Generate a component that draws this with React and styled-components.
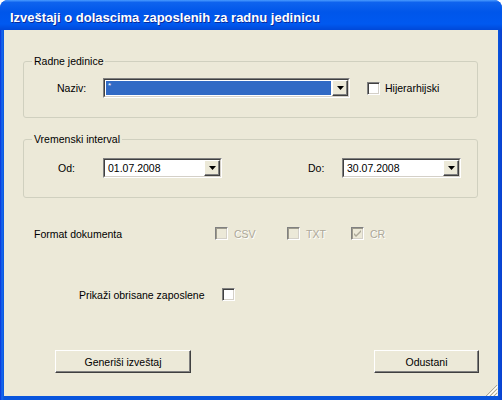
import React from "react";
import styled, { createGlobalStyle } from "styled-components";

const GlobalStyle = createGlobalStyle`
  html, body {
    margin: 0;
    padding: 0;
    background: #ffffff;
  }
  body {
    font-family: "Liberation Sans", Arial, sans-serif;
    font-size: 10.5px;
  }
`;

// prozor
const Window = styled.div`
  width: 502px;
  height: 400px;
  display: flex;
  flex-direction: column;
  box-sizing: border-box;
  background: #0855dd;
  border-radius: 8px 8px 0 0;
  overflow: hidden;
`;

const TitleBar = styled.div`
  height: 30px;
  flex: none;
  box-sizing: border-box;
  padding: 4px 0 0 10px;
  display: flex;
  align-items: center;
  background: linear-gradient(
    #4a9bff 0%,
    #0f63ee 8%,
    #0056ea 40%,
    #0059f0 80%,
    #0048d8 100%
  );
  color: #ffffff;
  font-family: "Liberation Sans", Arial, sans-serif;
  font-weight: bold;
  font-size: 13px;
  text-shadow: 1px 1px #0a2a9a;
  white-space: nowrap;
`;

const Frame = styled.div`
  flex: 1;
  display: flex;
  padding: 0 4px 4px 4px;
  background: linear-gradient(to right, #0831d9 0, #166aee 2px, #0855dd 4px, #0855dd 498px, #0a3fcf 502px);
`;

const Body = styled.div`
  position: relative;
  flex: 1;
  box-sizing: border-box;
  padding: 0 20px 0 19px;
  background: #ece9d8;
  display: flex;
  flex-direction: column;
  color: #000000;
`;

// okviri za grupe
const Group = styled.fieldset`
  margin: ${(p) => p.$top}px 0 0 0;
  padding: ${(p) => p.$padTop}px 0 19px 0;
  border: 1px solid #d0d0bf;
  border-radius: 3px;
  min-inline-size: 0;
`;

const Legend = styled.legend`
  margin-left: 8px;
  padding: 0 2px;
  line-height: 14px;
  height: 14px;
  color: #000000;
`;

const Row = styled.div`
  display: flex;
  align-items: center;
  padding-left: ${(p) => p.$pad || 0}px;
  height: ${(p) => p.$h || 20}px;
  margin-top: ${(p) => p.$top || 0}px;
`;

const Label = styled.span`
  width: ${(p) => (p.$w ? `${p.$w}px` : "auto")};
  flex: none;
  margin-right: ${(p) => p.$gap || 0}px;
  color: ${(p) => (p.$disabled ? "#aca899" : "#000")};
  text-shadow: ${(p) => (p.$disabled ? "1px 1px #ffffff" : "none")};
  white-space: nowrap;
`;

// kombo
const Combo = styled.div`
  width: ${(p) => p.$w}px;
  height: 20px;
  flex: none;
  box-sizing: border-box;
  display: flex;
  border-style: solid;
  border-width: 1px;
  border-color: #808080 #ffffff #ffffff #808080;
  margin-right: ${(p) => p.$gap || 0}px;
`;

const ComboInner = styled.div`
  flex: 1;
  display: flex;
  box-sizing: border-box;
  border-style: solid;
  border-width: 1px;
  border-color: #404040 #d4d0c8 #d4d0c8 #404040;
  background: #ffffff;
`;

const ComboValue = styled.div`
  flex: 1;
  margin: 1px;
  padding-left: 2px;
  display: flex;
  align-items: ${(p) => (p.$selected ? "flex-start" : "center")};
  background: ${(p) => (p.$selected ? "#316ac5" : "transparent")};
  color: ${(p) => (p.$selected ? "#ffffff" : "#000000")};
  font-size: ${(p) => (p.$selected ? "8px" : "10.5px")};
  line-height: ${(p) => (p.$selected ? "9px" : "14px")};
`;

const DropButton = styled.div`
  width: 16px;
  flex: none;
  box-sizing: border-box;
  display: flex;
  align-items: center;
  justify-content: center;
  background: #ece9d8;
  border-style: solid;
  border-width: 1px;
  border-color: #ffffff #404040 #404040 #ffffff;
  box-shadow: inset -1px -1px #808080;
`;

// check box
const Box = styled.span`
  width: 13px;
  height: 13px;
  flex: none;
  box-sizing: border-box;
  display: flex;
  align-items: center;
  justify-content: center;
  border-style: solid;
  border-width: 1px;
  border-color: #808080 #ffffff #ffffff #808080;
  margin-right: ${(p) => p.$gap || 0}px;
  background: ${(p) => (p.$disabled ? "#ece9d8" : "#ffffff")};
  box-shadow: inset 1px 1px ${(p) => (p.$disabled ? "#9d9a8c" : "#404040")},
    inset -1px -1px #d4d0c8;
`;

const Option = styled.div`
  width: ${(p) => p.$w}px;
  flex: none;
  display: flex;
  align-items: center;
`;

const ButtonRow = styled.div`
  display: flex;
  justify-content: space-between;
  padding-left: 32px;
  margin: 49px -1px 0 0;
`;

const Button = styled.button`
  width: ${(p) => p.$w}px;
  height: 23px;
  box-sizing: border-box;
  padding: 0;
  font-family: "Liberation Sans", Arial, sans-serif;
  font-size: 10.5px;
  color: #000000;
  background: #ece9d8;
  border-style: solid;
  border-width: 1px;
  border-color: #ffffff #404040 #404040 #ffffff;
  box-shadow: inset -1px -1px #808080;
`;

const Grip = styled.svg`
  position: absolute;
  right: 0;
  bottom: 0;
`;

const Arrow = () => (
  <svg width="7" height="4" viewBox="0 0 7 4">
    <path d="M0 0h7L3.5 4z" fill="#000" />
  </svg>
);

const Check = () => (
  <svg width="9" height="9" viewBox="0 0 9 9">
    <path d="M1 4l2 2 5-5v2L3 8 1 6z" fill="#aca899" />
  </svg>
);

const DateCombo = ({ value, w, gap }) => (
  <Combo $w={w} $gap={gap}>
    <ComboInner>
      <ComboValue>{value}</ComboValue>
      <DropButton>
        <Arrow />
      </DropButton>
    </ComboInner>
  </Combo>
);

const CheckOption = ({ label, w, checked }) => (
  <Option $w={w}>
    <Box $disabled $gap={6}>{checked && <Check />}</Box>
    <Label $disabled>{label}</Label>
  </Option>
);

const App = () => {
  return (
    <>
      <GlobalStyle />
      <Window>
        <TitleBar>Izveštaji o dolascima zaposlenih za radnu jedinicu</TitleBar>
        <Frame>
          <Body>
            <Group $top={24} $padTop={10}>
              <Legend>Radne jedinice</Legend>
              <Row $pad={33}>
                <Label $w={46}>Naziv:</Label>
                <Combo $w={247} $gap={17}>
                  <ComboInner>
                    <ComboValue $selected>*</ComboValue>
                    <DropButton>
                      <Arrow />
                    </DropButton>
                  </ComboInner>
                </Combo>
                <Box $gap={5} />
                <Label>Hijerarhijski</Label>
              </Row>
            </Group>

            <Group $top={14} $padTop={12}>
              <Legend>Vremenski interval</Legend>
              <Row $pad={34}>
                <Label $w={45}>Od:</Label>
                <DateCombo value="01.07.2008" w={119} gap={86} />
                <Label $w={34}>Do:</Label>
                <DateCombo value="30.07.2008" w={119} />
              </Row>
            </Group>

            <Row $pad={11} $h={13} $top={29}>
              <Label $w={181}>Format dokumenta</Label>
              <CheckOption label="CSV" w={72} />
              <CheckOption label="TXT" w={64} />
              <CheckOption label="CR" w={60} checked />
            </Row>

            <Row $pad={56} $h={13} $top={48}>
              <Label $gap={17}>Prikaži obrisane zaposlene</Label>
              <Box />
            </Row>

            <ButtonRow>
              <Button $w={136}>Generiši izveštaj</Button>
              <Button $w={105}>Odustani</Button>
            </ButtonRow>

            <Grip width="13" height="12" viewBox="0 0 13 12">
              <path d="M12 1L1 12M12 5L5 12M12 9L9 12" stroke="#aca899" strokeWidth="1" />
              <path d="M13 2L2 13M13 6L6 13M13 10L10 13" stroke="#ffffff" strokeWidth="1" />
            </Grip>
          </Body>
        </Frame>
      </Window>
    </>
  );
};

export default App;
